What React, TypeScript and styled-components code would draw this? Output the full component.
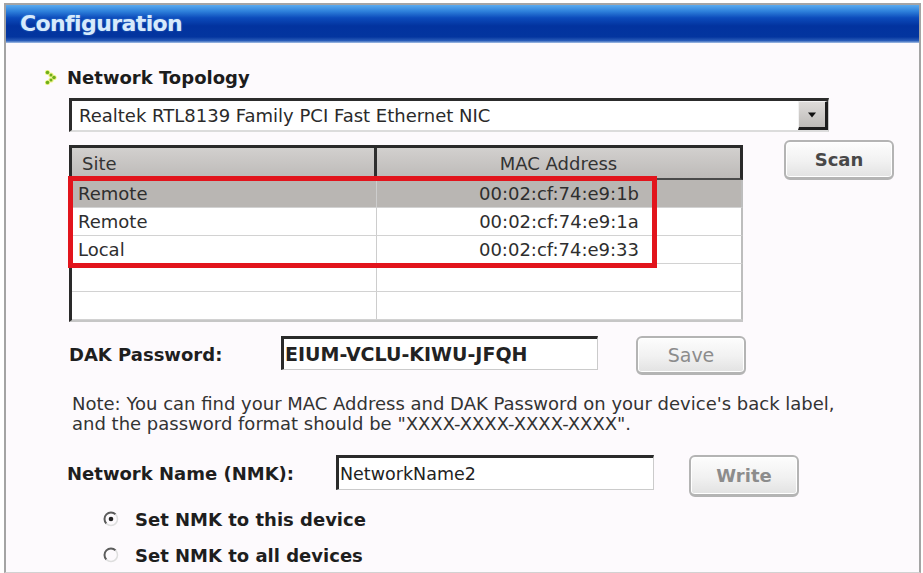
import styled, { createGlobalStyle } from 'styled-components';

const GlobalStyle = createGlobalStyle`
  html, body {
    margin: 0;
    padding: 0;
    background: #ffffff;
  }
  body {
    font-family: 'DejaVu Sans', Verdana, sans-serif;
    color: #222;
  }
  * {
    box-sizing: border-box;
  }
`;

const Frame = styled.div`
  margin: 3px 0 0 4px;
  width: 917px;
  height: 570px;
  border: 2px solid #a4a4a4;
  border-bottom: 1px solid #d2d2d2;
  background: #fdfafd;
  overflow: hidden;
`;

const TitleBar = styled.div`
  height: 38px;
  padding: 0 0 2px 14px;
  display: flex;
  align-items: center;
  background: linear-gradient(
    to bottom,
    #5aaaee 0%,
    #2f82dc 16%,
    #0c4bbb 34%,
    #02339f 55%,
    #03359f 84%,
    #2a5db9 94%,
    #a8c2e6 100%
  );
  color: #d6eafb;
  font-size: 22px;
  font-weight: 700;
  letter-spacing: -0.6px;
  text-shadow: 0 0 2px rgba(120, 180, 240, 0.55);
`;

const Content = styled.div`
  padding: 24px 0 0 63px;
  display: flex;
  flex-direction: column;
`;

const SectionHeading = styled.div`
  margin-left: -24px;
  height: 20px;
  display: flex;
  align-items: center;
  gap: 10px;
  font-size: 18px;
  font-weight: 700;
  color: #1c1c1c;
`;

const Combo = styled.div`
  margin-top: 11px;
  width: 760px;
  height: 34px;
  display: flex;
  border-top: 3px solid #2c2c2c;
  border-left: 3px solid #2c2c2c;
  border-right: 1px solid #c8c8c8;
  border-bottom: 2px solid #dcdcdc;
  background: #fff;
`;

const ComboText = styled.div`
  flex: 1;
  padding-left: 7px;
  display: flex;
  align-items: center;
  font-size: 18px;
  color: #2a2a2a;
`;

const ComboButton = styled.div`
  width: 30px;
  display: flex;
  align-items: center;
  justify-content: center;
  background: linear-gradient(to bottom, #dedcda, #bebbb8);
  border-left: 1px solid #f2f2f2;
  border-top: 1px solid #f2f2f2;
  border-right: 3px solid #1e1e1e;
  border-bottom: 3px solid #1e1e1e;
`;

const ListArea = styled.div`
  margin-top: 13px;
  display: flex;
  align-items: flex-start;
  gap: 41px;
`;

const ListView = styled.div`
  position: relative;
  width: 674px;
  border-top: 3px solid #2a2a2a;
  border-left: 3px solid #2a2a2a;
  border-bottom: 2px solid #c6c6c6;
  background: #fff;
`;

const ListHeader = styled.div`
  display: grid;
  grid-template-columns: 305px 1fr;
  height: 32px;
  background: linear-gradient(to bottom, #d2d0ce, #bdbab8);
  border-right: 3px solid #2a2a2a;
  border-bottom: 2px solid #4a4a4a;
  font-size: 18px;
  color: #333;
`;

const HeaderCell = styled.div<{ $center?: boolean }>`
  display: flex;
  align-items: center;
  justify-content: ${({ $center }) => ($center ? 'center' : 'flex-start')};
  padding-left: ${({ $center }) => ($center ? '0' : '10px')};
  &:first-child {
    border-right: 3px solid #2e2e2e;
  }
`;

const ListRow = styled.div<{ $selected?: boolean }>`
  display: grid;
  grid-template-columns: 305px 1fr;
  height: 28px;
  border-right: 2px solid #bdbdbd;
  border-bottom: 1px solid #d2d2d2;
  background: ${({ $selected }) => ($selected ? '#b9b6b3' : '#ffffff')};
  font-size: 18px;
  color: #2e2e2e;
  &:last-child {
    border-bottom: none;
  }
`;

const ListCell = styled.div<{ $center?: boolean }>`
  display: flex;
  align-items: center;
  justify-content: ${({ $center }) => ($center ? 'center' : 'flex-start')};
  padding-left: ${({ $center }) => ($center ? '0' : '6px')};
  &:first-child {
    border-right: 1px solid #cdcdcd;
  }
`;

const Highlight = styled.div`
  position: absolute;
  left: -4px;
  top: 28px;
  width: 589px;
  height: 92px;
  border: 5px solid #e2141c;
  pointer-events: none;
`;

const PushButton = styled.button<{ $w: number; $h: number; $muted?: boolean; $bold?: boolean; $size: number }>`
  width: ${({ $w }) => $w}px;
  height: ${({ $h }) => $h}px;
  padding: 0;
  border: 2px solid #b4b4b4;
  border-bottom-width: 3px;
  border-radius: 6px;
  background: linear-gradient(to bottom, #fdfdfd 0%, #f1f1f1 55%, #e2e2e2 100%);
  box-shadow: inset 0 0 0 1px #ffffff;
  font-family: 'DejaVu Sans', Verdana, sans-serif;
  font-size: ${({ $size }) => $size}px;
  font-weight: ${({ $bold }) => ($bold ? 700 : 400)};
  color: ${({ $muted }) => ($muted ? '#8c8c8c' : '#484848')};
  cursor: default;
`;

const ScanButton = styled(PushButton)`
  margin-top: -5px;
`;

const FieldRow = styled.div<{ $top: number; $shift?: number }>`
  margin-top: ${({ $top }) => $top}px;
  margin-left: ${({ $shift }) => $shift ?? 0}px;
  display: flex;
  align-items: flex-start;
`;

const FieldLabel = styled.div<{ $w: number }>`
  width: ${({ $w }) => $w}px;
  height: 38px;
  line-height: 38px;
  font-size: 18px;
  font-weight: 700;
  color: #1e1e1e;
  white-space: nowrap;
`;

const TextField = styled.div<{ $w: number; $h: number; $bold?: boolean; $size: number }>`
  width: ${({ $w }) => $w}px;
  height: ${({ $h }) => $h}px;
  padding-left: 1px;
  display: flex;
  align-items: center;
  background: #fff;
  border-top: 3px solid #2a2a2a;
  border-left: 3px solid #2a2a2a;
  border-right: 1px solid #cbcbcb;
  border-bottom: 1px solid #cbcbcb;
  font-size: ${({ $size }) => $size}px;
  font-weight: ${({ $bold }) => ($bold ? 700 : 400)};
  color: #222;
  white-space: nowrap;
  overflow: hidden;
`;

const FieldGap = styled.div<{ $w: number }>`
  width: ${({ $w }) => $w}px;
  flex: none;
`;

const Note = styled.p`
  margin: 19px 0 0 3px;
  font-size: 18px;
  line-height: 20px;
  color: #333;
`;

const RadioList = styled.div`
  margin: 10px 0 0 34px;
  display: flex;
  flex-direction: column;
  gap: 12px;
`;

const RadioOption = styled.label`
  height: 24px;
  display: flex;
  align-items: center;
  gap: 16px;
  font-size: 18px;
  font-weight: 700;
  color: #1e1e1e;
`;

const Bullet = () => (
  <svg width="12" height="15" viewBox="0 0 12 15">
    <g fill="#eef47a" opacity="0.9">
      <circle cx="2.5" cy="2.5" r="2.6" />
      <circle cx="6" cy="5" r="2.6" />
      <circle cx="9" cy="7.5" r="2.6" />
      <circle cx="6" cy="10" r="2.6" />
      <circle cx="2.5" cy="12.5" r="2.6" />
    </g>
    <g fill="#6fae1c">
      <circle cx="2.5" cy="2.5" r="1.8" />
      <circle cx="6" cy="5" r="1.5" />
      <circle cx="9" cy="7.5" r="1.8" />
      <circle cx="6" cy="10" r="1.5" />
      <circle cx="2.5" cy="12.5" r="1.8" />
    </g>
  </svg>
);

const ComboArrow = () => (
  <svg width="10" height="6" viewBox="0 0 10 6">
    <path d="M1 0.5 H9 L5 5.5 Z" fill="#111" />
  </svg>
);

const RadioMark = ({ checked }: { checked?: boolean }) => (
  <svg width="16" height="16" viewBox="0 0 16 16">
    <circle cx="8" cy="8" r="6.5" fill="#fdfafd" />
    <path d="M12.6 3.4 A6.5 6.5 0 1 0 3.4 12.6" fill="none" stroke="#5c5c5c" strokeWidth="2" />
    <path d="M3.4 12.6 A6.5 6.5 0 0 0 12.6 3.4" fill="none" stroke="#dedede" strokeWidth="1.5" />
    {checked && <circle cx="8" cy="8" r="2.3" fill="#222" />}
  </svg>
);

const stations = [
  { site: 'Remote', mac: '00:02:cf:74:e9:1b', selected: true },
  { site: 'Remote', mac: '00:02:cf:74:e9:1a' },
  { site: 'Local', mac: '00:02:cf:74:e9:33' },
  { site: '', mac: '' },
  { site: '', mac: '' },
];

export default function App() {
  return (
    <>
      <GlobalStyle />
      <Frame>
        <TitleBar>Configuration</TitleBar>
        <Content>
          <SectionHeading>
            <Bullet />
            Network Topology
          </SectionHeading>

          <Combo>
            <ComboText>Realtek RTL8139 Family PCI Fast Ethernet NIC</ComboText>
            <ComboButton>
              <ComboArrow />
            </ComboButton>
          </Combo>

          <ListArea>
            <ListView>
              <ListHeader>
                <HeaderCell>Site</HeaderCell>
                <HeaderCell $center>MAC Address</HeaderCell>
              </ListHeader>
              {stations.map((s, i) => (
                <ListRow key={i} $selected={s.selected}>
                  <ListCell>{s.site}</ListCell>
                  <ListCell $center>{s.mac}</ListCell>
                </ListRow>
              ))}
              <Highlight />
            </ListView>
            <ScanButton $w={110} $h={40} $size={18} $bold>
              Scan
            </ScanButton>
          </ListArea>

          <FieldRow $top={14}>
            <FieldLabel $w={212}>DAK Password:</FieldLabel>
            <TextField $w={317} $h={34} $size={19} $bold>
              EIUM-VCLU-KIWU-JFQH
            </TextField>
            <FieldGap $w={38} />
            <PushButton $w={110} $h={39} $size={19} $muted>
              Save
            </PushButton>
          </FieldRow>

          <Note>
            Note: You can find your MAC Address and DAK Password on your device's back label,
            <br />
            and the password format should be "XXXX-XXXX-XXXX-XXXX".
          </Note>

          <FieldRow $top={21} $shift={-2}>
            <FieldLabel $w={269}>Network Name (NMK):</FieldLabel>
            <TextField $w={318} $h={35} $size={17.5}>
              NetworkName2
            </TextField>
            <FieldGap $w={35} />
            <PushButton $w={110} $h={42} $size={18} $muted $bold>
              Write
            </PushButton>
          </FieldRow>

          <RadioList>
            <RadioOption>
              <RadioMark checked />
              Set NMK to this device
            </RadioOption>
            <RadioOption>
              <RadioMark />
              Set NMK to all devices
            </RadioOption>
          </RadioList>
        </Content>
      </Frame>
    </>
  );
}
